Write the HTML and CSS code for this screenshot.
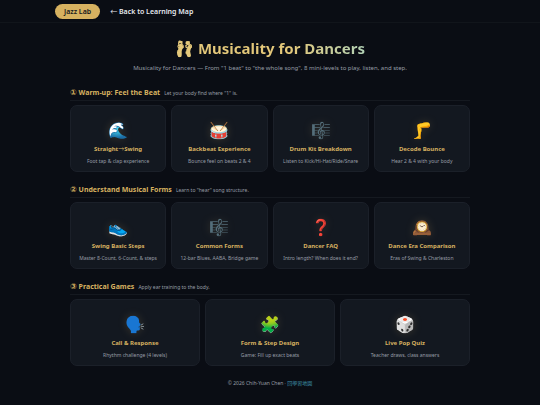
FILE: index.html
```
<!DOCTYPE html>
<html lang="en">
<head>
	<meta charset="UTF-8">
	<title>Musicality for Dancers</title>
	<link rel="stylesheet" href="styles.css">
</head>
<body>

	<header class="topbar">
		<nav class="topbar-inner">
			<a class="pill" href="#">Jazz Lab</a>
			<a class="back" href="#"><span class="arrow">←</span> Back to Learning Map</a>
		</nav>
	</header>

	<main class="container">
		<h1 class="title">🩰 Musicality for Dancers</h1>
		<p class="subtitle">Musicality for Dancers — From "1 beat" to "the whole song", 8 mini-levels to play, listen, and step.</p>

		<section>
			<div class="section-head">
				<h2><span class="num">①</span> Warm-up: Feel the Beat</h2>
				<p>Let your body find where "1" is.</p>
			</div>
			<div class="cards">
				<a class="card" href="#">
					<span class="icon">🌊</span>
					<h3>Straight<span class="arrow">→</span>Swing</h3>
					<p>Foot tap &amp; clap experience</p>
				</a>
				<a class="card" href="#">
					<span class="icon">🥁</span>
					<h3>Backbeat Experience</h3>
					<p>Bounce feel on beats 2 &amp; 4</p>
				</a>
				<a class="card" href="#">
					<span class="icon">🎼</span>
					<h3>Drum Kit Breakdown</h3>
					<p>Listen to Kick/Hi-Hat/Ride/Snare</p>
				</a>
				<a class="card" href="#">
					<span class="icon">🦵</span>
					<h3>Decode Bounce</h3>
					<p>Hear 2 &amp; 4 with your body</p>
				</a>
			</div>
		</section>

		<section>
			<div class="section-head">
				<h2><span class="num">②</span> Understand Musical Forms</h2>
				<p>Learn to "hear" song structure.</p>
			</div>
			<div class="cards">
				<a class="card" href="#">
					<span class="icon">👟</span>
					<h3>Swing Basic Steps</h3>
					<p>Master 8-Count, 6-Count, &amp; steps</p>
				</a>
				<a class="card" href="#">
					<span class="icon">🎼</span>
					<h3>Common Forms</h3>
					<p>12-bar Blues, AABA, Bridge game</p>
				</a>
				<a class="card" href="#">
					<span class="icon">❓</span>
					<h3>Dancer FAQ</h3>
					<p>Intro length? When does it end?</p>
				</a>
				<a class="card" href="#">
					<span class="icon">🕰️</span>
					<h3>Dance Era Comparison</h3>
					<p>Eras of Swing &amp; Charleston</p>
				</a>
			</div>
		</section>

		<section>
			<div class="section-head">
				<h2><span class="num">③</span> Practical Games</h2>
				<p>Apply ear training to the body.</p>
			</div>
			<div class="cards">
				<a class="card" href="#">
					<span class="icon">🗣️</span>
					<h3>Call &amp; Response</h3>
					<p>Rhythm challenge (4 levels)</p>
				</a>
				<a class="card" href="#">
					<span class="icon">🧩</span>
					<h3>Form &amp; Step Design</h3>
					<p>Game: Fill up exact beats</p>
				</a>
				<a class="card" href="#">
					<span class="icon">🎲</span>
					<h3>Live Pop Quiz</h3>
					<p>Teacher draws, class answers</p>
				</a>
			</div>
		</section>
	</main>

	<footer class="footer">© 2026 Chih-Yuan Chen · <a href="#" lang="zh-Hant">回學習地圖</a></footer>

</body>
</html>
```
FILE: styles.css
```
*{
	box-sizing: border-box;
}
body{
	margin: 0;
	min-height: 100vh;
	background-color: #0a0d14;
	color: #e6e9ef;
	font-family: "Noto Sans", "Noto Sans CJK TC", sans-serif;
	font-size: 5px;
}
h1, h2, h3, p{
	margin: 0;
}
a{
	color: inherit;
	text-decoration: none;
}

/*top bar*/
.topbar{
	border-bottom: 1px solid #11151b;
}
.topbar-inner{
	display: flex;
	align-items: center;
	gap: 10px;
	max-width: 430px;
	margin: 0 auto;
	padding: 4px 0 3px;
	font-size: 7px;
	font-weight: 600;
	line-height: 15px;
}
.pill{
	padding: 0 9px;
	border-radius: 8px;
	background-color: #d6b160;
	color: #14171c;
}
.arrow{
	font-family: "Noto Sans CJK TC", sans-serif;
	font-weight: 400;
	line-height: 1;
}
.num{
	font-family: "DejaVu Sans", sans-serif;
	font-size: 8px;
	line-height: 1;
}

/*main area*/
.container{
	max-width: 400px;
	margin: 0 auto;
	padding-top: 14px;
}
.title{
	width: fit-content;
	margin: 0 auto;
	background-image: linear-gradient(90deg, #e4c87a 60%, #a5d3c4 110%);
	-webkit-background-clip: text;
	background-clip: text;
	color: transparent;
	font-size: 15px;
	line-height: 22px;
}
.subtitle{
	margin: 4px 0 14px;
	color: #979da6;
	font-size: 6px;
	line-height: 10px;
	text-align: center;
}

/*sections*/
.section-head{
	display: flex;
	align-items: baseline;
	gap: 4px;
	margin-bottom: 4px;
	padding-bottom: 1px;
	border-bottom: 1px solid #151920;
}
.section-head h2{
	color: #d6b160;
	font-size: 7px;
	line-height: 12px;
}
.section-head p{
	color: #979da6;
}
.cards{
	display: grid;
	grid-auto-flow: column;
	grid-auto-columns: 1fr;
	gap: 5px;
	margin-bottom: 12px;
}
.card{
	padding: 13px 4px 6px;
	border: 1px solid #1b2029;
	border-radius: 7px;
	background-color: #131820;
	text-align: center;
}
.icon{
	display: block;
	font-size: 16px;
	line-height: 22px;
	filter: drop-shadow(0 0 4px rgba(214, 177, 96, 0.2));
}
.card h3{
	margin: 3px 0;
	color: #d6b160;
	font-size: 6px;
	line-height: 10px;
}
.card p{
	color: #979da6;
	line-height: 8px;
}

.footer{
	padding: 0 0 18px;
	color: #979da6;
	line-height: 10px;
	text-align: center;
}
.footer a{
	color: #3f91ab;
}
```
